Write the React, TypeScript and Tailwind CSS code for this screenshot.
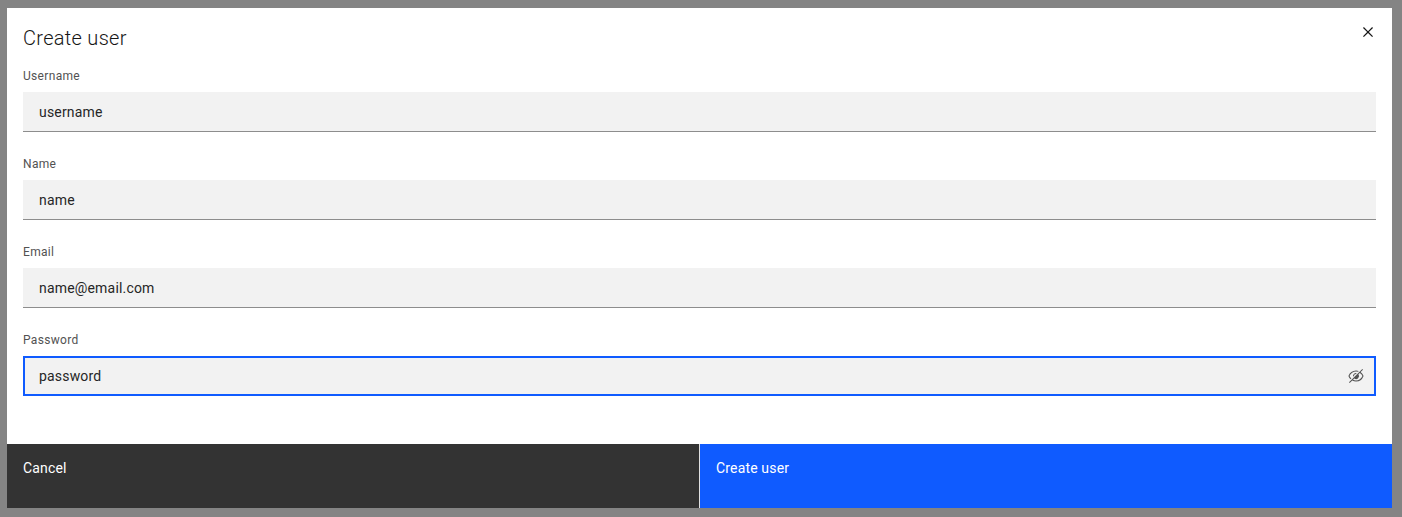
const fields = [
  { label: 'Username', value: 'username' },
  { label: 'Name', value: 'name' },
  { label: 'Email', value: 'name@email.com' },
]

function CloseIcon() {
  return (
    <svg width="20" height="20" viewBox="0 0 32 32" fill="#161616">
      <path d="M24 9.4L22.6 8 16 14.6 9.4 8 8 9.4 14.6 16 8 22.6 9.4 24 16 17.4 22.6 24 24 22.6 17.4 16 24 9.4z" />
    </svg>
  )
}

function ViewOffIcon() {
  return (
    <svg width="16" height="16" viewBox="0 0 32 32" fill="#525252">
      <path d="M5.24,22.51l1.43-1.42A14.06,14.06,0,0,1,3.07,16C5.1,10.93,10.7,7,16,7a12.38,12.38,0,0,1,4,.72L21.55,6.15A14.72,14.72,0,0,0,16,5,16.69,16.69,0,0,0,1.06,15.66a1,1,0,0,0,0,.68A16,16,0,0,0,5.24,22.51Z" />
      <path d="M12,15.73a4,4,0,0,1,3.7-3.7l1.81-1.82a6,6,0,0,0-7.33,7.33Z" />
      <path d="M30.94,15.66A16.4,16.4,0,0,0,25.2,8.22L30,3.41,28.59,2,2,28.59,3.41,30l5.1-5.1A15.29,15.29,0,0,0,16,27,16.69,16.69,0,0,0,30.94,16.34,1,1,0,0,0,30.94,15.66ZM16,25a13.35,13.35,0,0,1-5.99-1.5l2.54-2.54a6,6,0,0,0,8.36-8.36L23.67,9.84A14.36,14.36,0,0,1,28.93,16C26.9,21.07,21.3,25,16,25Z" />
      <path d="M20,16a4,4,0,0,1-6,3.46L19.46,14A4,4,0,0,1,20,16Z" />
    </svg>
  )
}

export default function App() {
  return (
    <div className="h-[517px] w-[1402px] overflow-hidden bg-[#848484] pl-[7px] pt-2 font-['Roboto',sans-serif]">
      <div className="flex h-[500px] w-[1385px] flex-col bg-white">
        <div className="relative px-4 pt-4">
          <h2 className="mb-4 text-[20px] font-light leading-7 tracking-[0.3px] text-[#161616]">Create user</h2>
          <button className="absolute right-[14px] top-[14px] flex h-5 w-5 items-center justify-center">
            <CloseIcon />
          </button>
        </div>

        <form className="flex flex-1 flex-col gap-6 px-4">
          {fields.map(({ label, value }) => (
            <div key={label}>
              <label className="mb-2 block text-[12px] leading-4 tracking-[0.32px] text-[#525252]">{label}</label>
              <input
                readOnly
                value={value}
                className="block h-10 w-full border-b border-[#8d8d8d] bg-[#f2f2f2] px-4 text-[14px] tracking-[0.18px] text-[#262626] outline-none"
              />
            </div>
          ))}
          <div>
            <label className="mb-2 block text-[12px] leading-4 tracking-[0.32px] text-[#525252]">Password</label>
            <div className="flex h-10 w-full items-center border-2 border-[#0f5bff] bg-[#f2f2f2] pl-[14px] pr-[10px]">
              <input
                readOnly
                value="password"
                className="min-w-0 flex-1 bg-transparent text-[14px] tracking-[0.18px] text-[#262626] outline-none"
              />
              <ViewOffIcon />
            </div>
          </div>
        </form>

        <div className="flex h-16">
          <button className="flex w-[692px] items-start bg-[#333333] px-4 pt-[15px] text-[14px] leading-[18px] tracking-[0.16px] text-white">
            Cancel
          </button>
          <div className="w-px bg-[#e0e0e0]" />
          <button className="flex flex-1 items-start bg-[#0f5bff] px-4 pt-[15px] text-[14px] leading-[18px] tracking-[0.16px] text-white">
            Create user
          </button>
        </div>
      </div>
    </div>
  )
}
